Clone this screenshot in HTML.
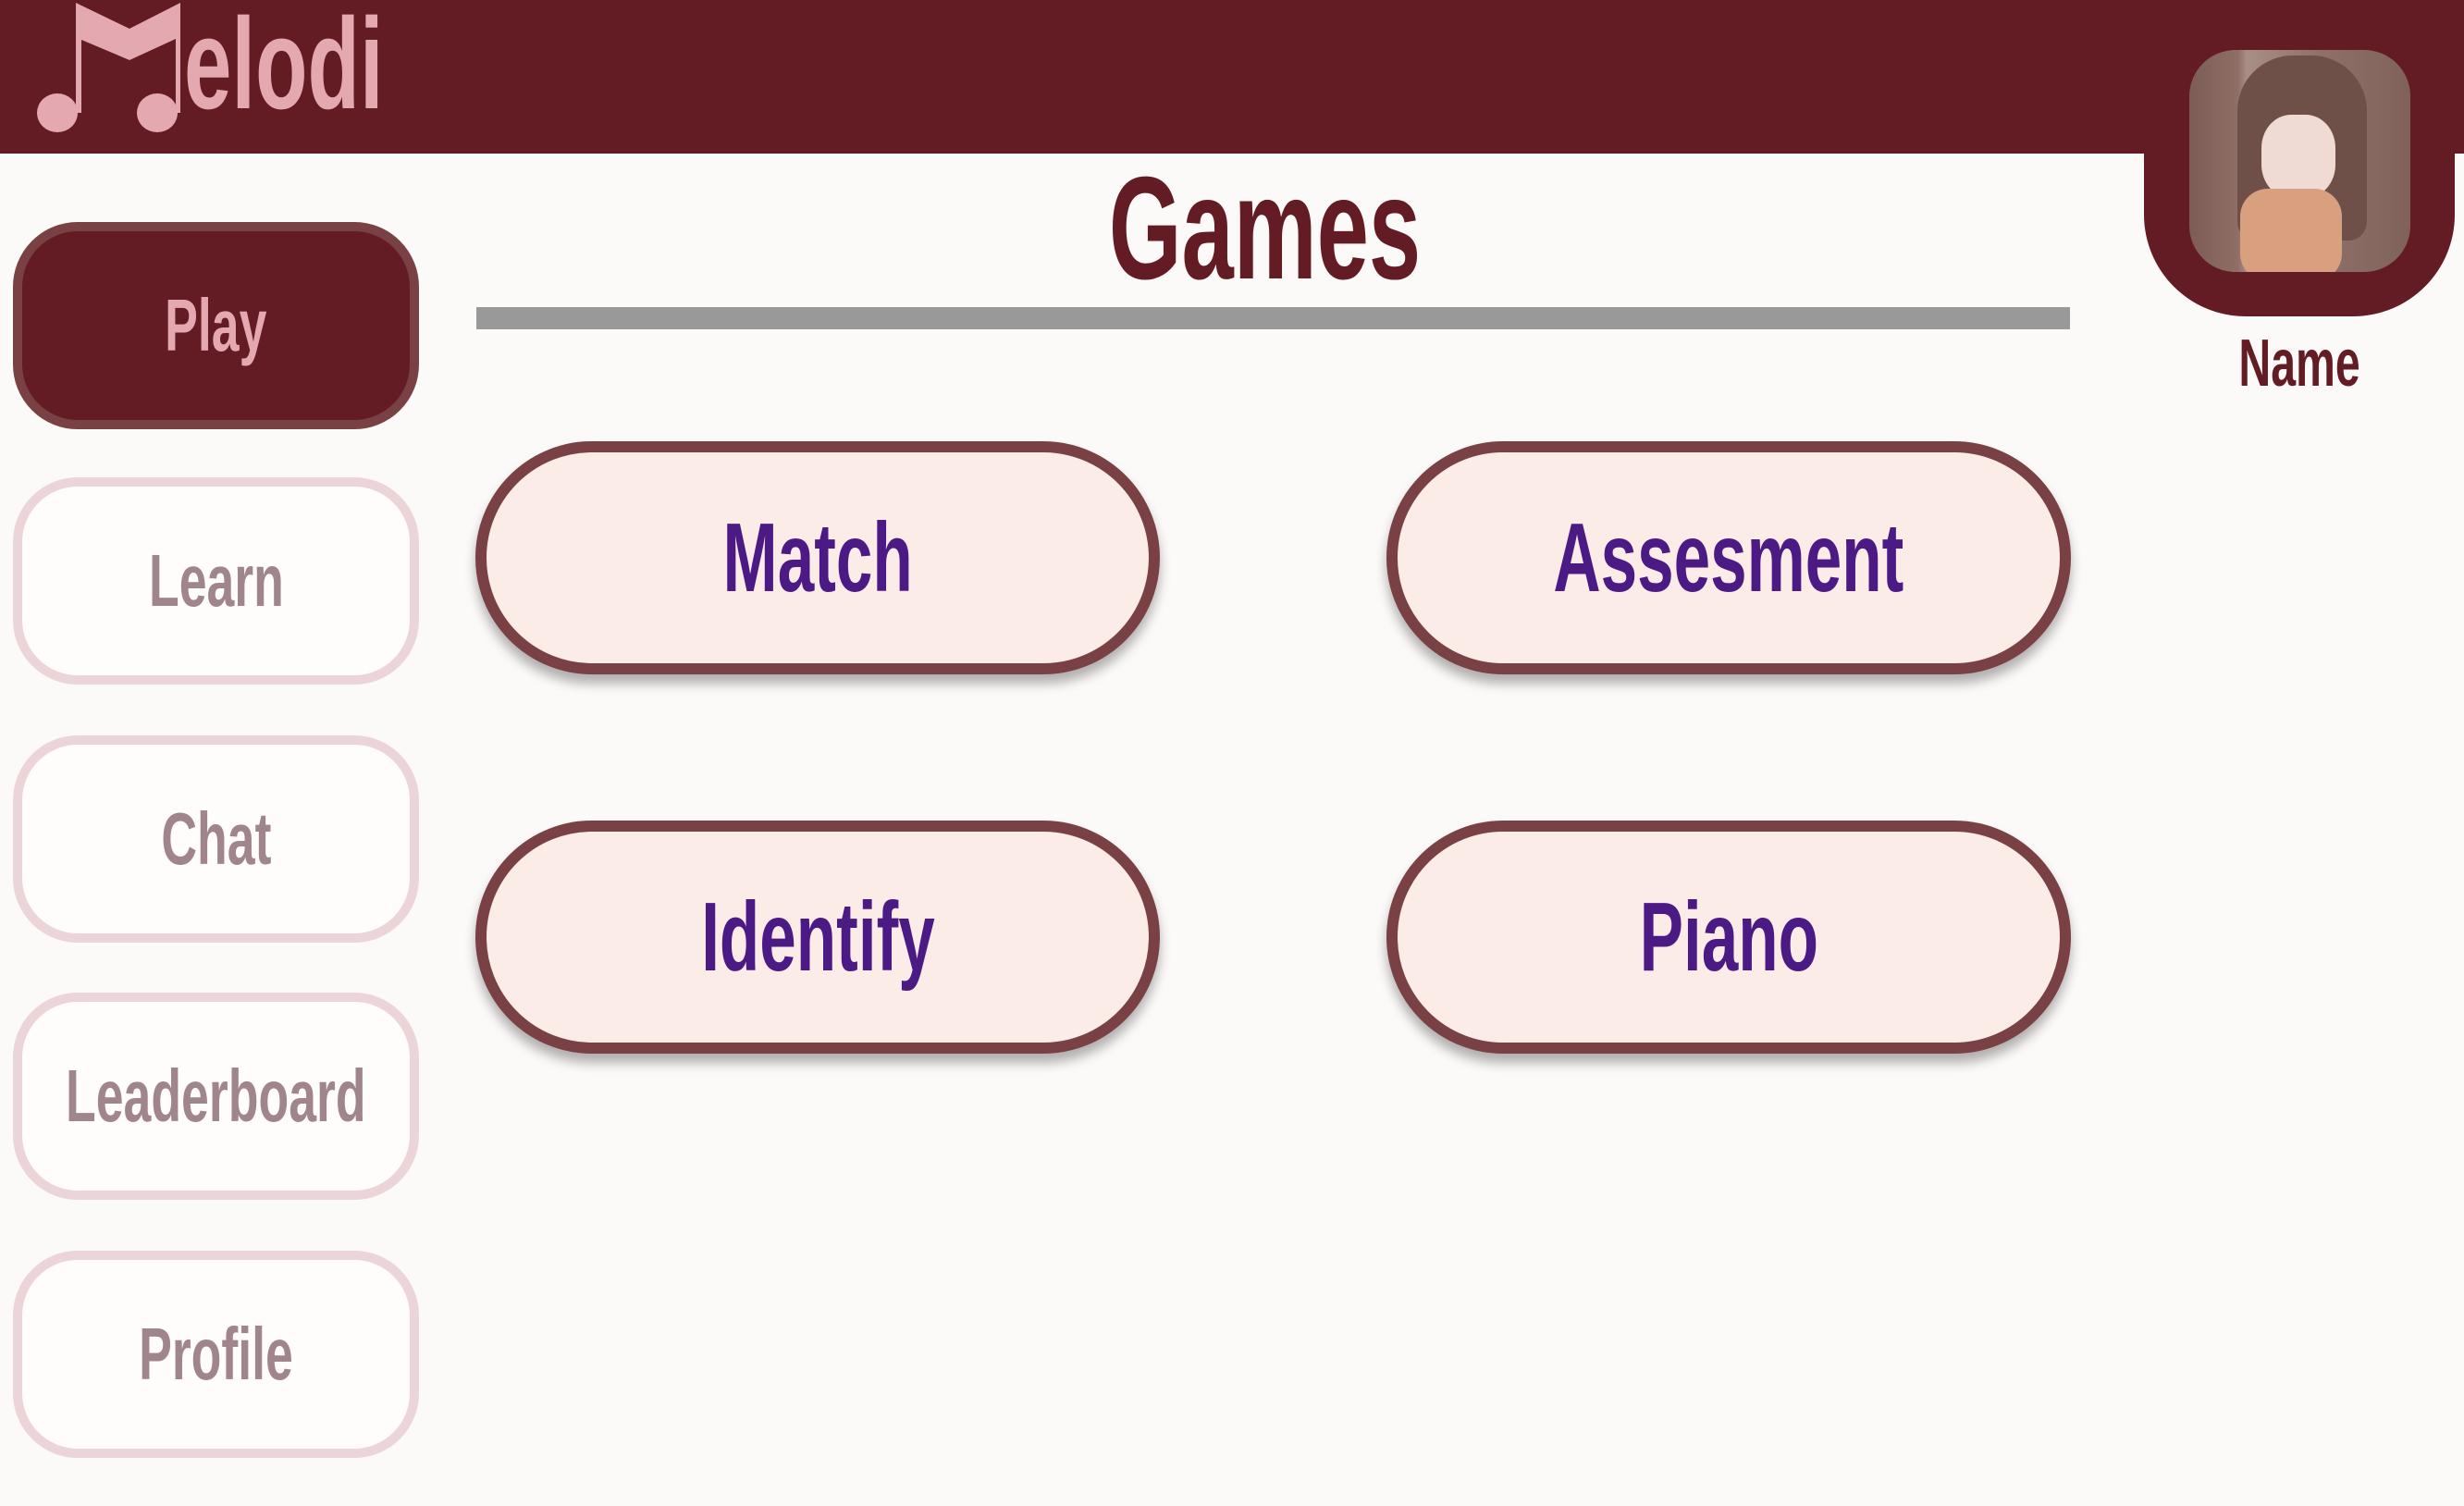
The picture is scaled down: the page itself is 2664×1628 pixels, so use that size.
<!DOCTYPE html>
<html><head><meta charset="utf-8"><style>
html,body{margin:0;padding:0}
body{width:2664px;height:1628px;background:#fcfaf8;position:relative;overflow:hidden;font-family:"Liberation Sans Narrow","Liberation Sans",sans-serif;font-weight:bold}
.abs{position:absolute;box-sizing:border-box}
.t{display:inline-block;transform:scaleX(0.67);white-space:nowrap}
.nav{left:14px;width:439px;height:224px;border-radius:70px;border:10px solid #ecd5d8;background:#fffcfc;display:flex;align-items:center;justify-content:center;color:#a0868c;font-size:80px}
.g{width:740px;height:252px;border-radius:126px;border:12px solid #7a4144;background:#fbece8;display:flex;align-items:center;justify-content:center;color:#4b1a84;font-size:106px;box-shadow:0 10px 12px rgba(0,0,0,0.3)}
</style></head><body>
<div class="abs" style="left:0;top:0;width:2664px;height:166px;background:#631c24"></div>
<svg class="abs" style="left:0;top:0" width="440" height="160" viewBox="0 0 440 160">
<g fill="#e4a8b0">
<ellipse cx="62" cy="122" rx="22" ry="21"/>
<ellipse cx="170" cy="122" rx="22" ry="21"/>
<polygon points="82,3 140,31 195,3 195,122 190,122 190,42 140,65 88,43 88,122 82,122"/>
</g>
<text x="199" y="117" font-family="Liberation Sans Narrow, Liberation Sans, sans-serif" font-weight="bold" font-size="140" fill="#e4a8b0" transform="translate(199 0) scale(0.66 1) translate(-199 0)">elodi</text>
</svg>
<div class="abs" style="left:2318px;top:0;width:336px;height:342px;background:#631c24;border-radius:0 0 110px 110px"></div>
<div class="abs" style="left:2367px;top:54px;width:239px;height:240px;border-radius:50px;overflow:hidden;background:linear-gradient(90deg,#7d5c55 0%,#8f6e66 22%,#a88f85 26%,#8e7068 60%,#7f625a 100%)">
<div class="abs" style="left:52px;top:6px;width:140px;height:200px;border-radius:60px 60px 20px 20px;background:#6e5048"></div>
<div class="abs" style="left:78px;top:70px;width:80px;height:90px;border-radius:40%;background:#f0dad4"></div>
<div class="abs" style="left:55px;top:150px;width:110px;height:100px;border-radius:30px;background:#d9a07f"></div>
</div>
<div class="abs" style="left:2336px;top:352px;width:300px;text-align:center;color:#631c24;font-size:72px"><span class="t">Name</span></div>
<div class="abs" style="left:900px;top:162px;width:936px;text-align:center;color:#631c24;font-size:158px;line-height:170px"><span class="t" style="transform:scaleX(0.64)">Games</span></div>
<div class="abs" style="left:515px;top:332px;width:1723px;height:24px;background:#999"></div>
<div class="abs nav" style="top:240px;background:#631c24;border-color:#7a4144;color:#e4a8b0"><span class="t">Play</span></div>
<div class="abs nav" style="top:516px"><span class="t">Learn</span></div>
<div class="abs nav" style="top:795px"><span class="t">Chat</span></div>
<div class="abs nav" style="top:1073px"><span class="t">Leaderboard</span></div>
<div class="abs nav" style="top:1352px"><span class="t">Profile</span></div>
<div class="abs g" style="left:514px;top:477px"><span class="t">Match</span></div>
<div class="abs g" style="left:1499px;top:477px"><span class="t">Assesment</span></div>
<div class="abs g" style="left:514px;top:887px"><span class="t">Identify</span></div>
<div class="abs g" style="left:1499px;top:887px"><span class="t">Piano</span></div>
</body></html>
